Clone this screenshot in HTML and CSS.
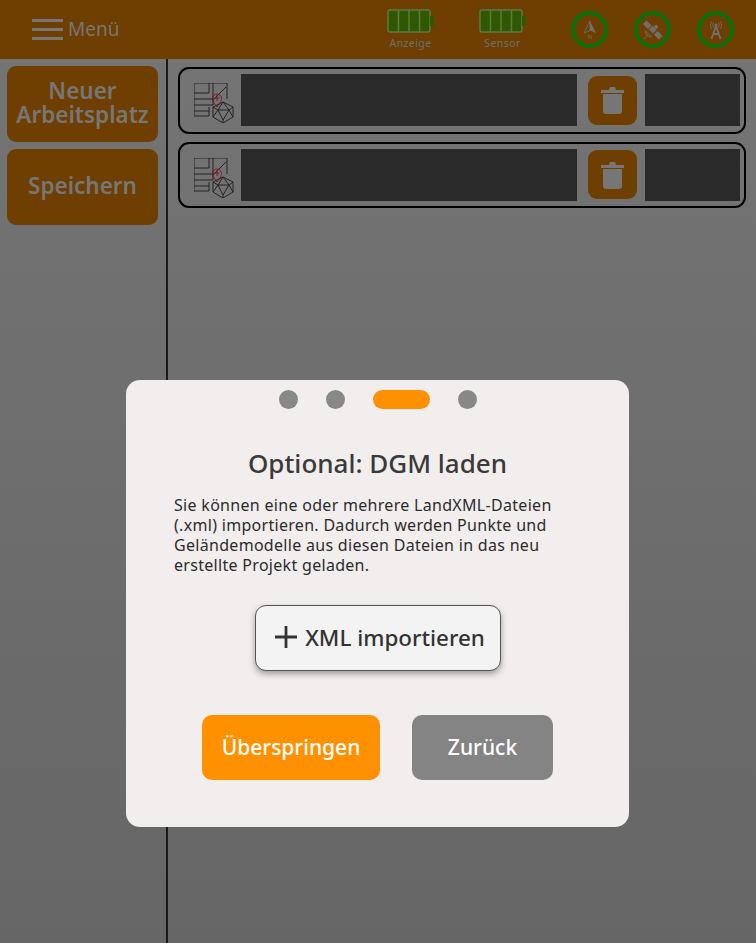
FILE: index.html
```html
<!DOCTYPE html>
<html lang="de">
<head>
    <meta charset="UTF-8">
    <title>Arbeitsplatz</title>
    <link rel="stylesheet" href="styles.css">
</head>
<body>
    <svg class="defs" width="0" height="0">
        <symbol id="tin-icon" viewBox="0 0 40 40">
            <g fill="none" stroke="#1c1c1c" stroke-width="0.9">
                <path d="M15 24V33H0V0H33V16"/>
                <path d="M0 10H15V0M19 0V22M0 16H19M0 22H19M0 28H15M19 17L32 4"/>
                <path d="M29 19L39 24V34L29 40L19 34V24ZM24 27H35L29 37ZM29 19L24 27L19 34M29 19L35 27L39 34M35 27L39 24M24 27L19 24M29 37V40"/>
            </g>
            <path d="M23 24C19 19 18.500 17 18.500 15.500A4.500 4.500 0 0 1 27.500 15.500C27.500 17 27 19 23 24ZM23 12V18M20.500 15H25.500" fill="none" stroke="#7d1a22" stroke-width="1"/>
        </symbol>
        <symbol id="trash-icon" viewBox="0 0 24 30">
            <path d="M0 5H23V8H0ZM8 5L9 2H14L15 5Z" fill="#767676"/>
            <path d="M2 9H21V26Q21 29 18 29H5Q2 29 2 26Z" fill="#767676"/>
        </symbol>
        <symbol id="battery-icon" viewBox="0 0 47 24">
            <rect x="1" y="1" width="42" height="22" rx="2" fill="#2f5800" stroke="#5d7a45" stroke-width="1.500"/>
            <path d="M11.500 1V23M22 1V23M32.500 1V23" stroke="#5d7a45" stroke-width="1.500"/>
            <path d="M43 7H47V17H43Z" fill="#2f5800"/>
        </symbol>
    </svg>

    <header class="topbar">
        <div class="menu">
            <span class="burger"><i></i><i></i><i></i></span>
            <span class="menu-label">Menü</span>
        </div>
        <div class="status">
            <div class="battery">
                <svg width="47" height="24"><use href="#battery-icon"/></svg>
                <span>Anzeige</span>
            </div>
            <div class="battery">
                <svg width="47" height="24"><use href="#battery-icon"/></svg>
                <span>Sensor</span>
            </div>
            <div class="rings">
                <div class="ring">
                    <svg width="20" height="20" viewBox="0 0 20 20">
                        <path d="M10 1L16 13L10 10.500Z" fill="#707070"/>
                        <path d="M10 1L4 13L10 10.500Z" fill="none" stroke="#707070" stroke-width="0.800"/>
                        <text x="10" y="19" class="north">N</text>
                    </svg>
                </div>
                <div class="ring">
                    <svg width="20" height="20" viewBox="0 0 20 20">
                        <g fill="#707070">
                            <path d="M3.500 0.500L8.500 5.500L5 9L0 4ZM14.500 11L19.500 16L16 19.500L11 14.500Z"/>
                            <path d="M9.500 6L13.500 10L10 13.500L6 9.500Z"/>
                            <path d="M13 4.500L15.500 7L13 9.500L10.500 7Z"/>
                        </g>
                        <path d="M2 10.500C2.500 14.500 4.500 16.500 8.500 17ZM1 19L5 14.500" fill="none" stroke="#707070" stroke-width="0.800"/>
                    </svg>
                </div>
                <div class="ring">
                    <svg width="20" height="20" viewBox="0 0 20 20">
                        <path d="M10 6L5.500 19M10 6L14.500 19M7 14H13" fill="none" stroke="#707070" stroke-width="1.800"/>
                        <circle cx="10" cy="5" r="1.500" fill="#707070"/>
                        <path d="M7.500 2.500Q6 5 7.500 7.500M12.500 2.500Q14 5 12.500 7.500M5.500 1Q3.300 5 5.500 9M14.500 1Q16.700 5 14.500 9" fill="none" stroke="#707070" stroke-width="0.800"/>
                    </svg>
                </div>
            </div>
        </div>
    </header>

    <div class="workspace">
        <aside class="sidebar">
            <button class="side-btn">Neuer Arbeitsplatz</button>
            <button class="side-btn">Speichern</button>
        </aside>
        <main class="content">
            <div class="row">
                <svg class="tin" width="40" height="40"><use href="#tin-icon"/></svg>
                <div class="field name-field"></div>
                <button class="trash"><svg width="24" height="30"><use href="#trash-icon"/></svg></button>
                <div class="field date-field"></div>
            </div>
            <div class="row">
                <svg class="tin" width="40" height="40"><use href="#tin-icon"/></svg>
                <div class="field name-field"></div>
                <button class="trash"><svg width="24" height="30"><use href="#trash-icon"/></svg></button>
                <div class="field date-field"></div>
            </div>
        </main>
    </div>

    <div class="overlay">
        <section class="dialog">
            <div class="steps">
                <span class="dot"></span>
                <span class="dot"></span>
                <span class="dot active"></span>
                <span class="dot"></span>
            </div>
            <h2>Optional: DGM laden</h2>
            <p>Sie können eine oder mehrere LandXML-Dateien<br>(.xml) importieren. Dadurch werden Punkte und<br>Geländemodelle aus diesen Dateien in das neu<br>erstellte Projekt geladen.</p>
            <button class="import-btn">
                <svg width="24" height="24" viewBox="0 0 24 24"><path d="M12 1V23M1 12H23" stroke="#333" stroke-width="2.800"/></svg>
                XML importieren
            </button>
            <div class="actions">
                <button class="action skip">Überspringen</button>
                <button class="action back">Zurück</button>
            </div>
        </section>
    </div>
</body>
</html>
```

FILE: styles.css
```css
* {
    margin: 0;
    padding: 0;
    box-sizing: border-box;
    font-family: 'Noto Sans', sans-serif;
}

:root {
    --dim-orange: #6e3f00;
    --dim-text: #767676;
    --orange: #ff9000;
}

html, body {
    height: 100%;
    overflow: hidden;
}

body {
    position: relative;
    background: linear-gradient(#757575, #666666);
    display: flex;
    flex-direction: column;
}

button {
    border: none;
    cursor: pointer;
}

.defs {
    position: absolute;
}

.topbar {
    height: 59px;
    flex-shrink: 0;
    background-color: var(--dim-orange);
    display: flex;
    justify-content: space-between;
    padding: 0 22px 0 32px;
}

.menu {
    display: flex;
    align-items: center;
    gap: 5px;
}

.burger {
    display: flex;
    flex-direction: column;
    gap: 6px;
    width: 31px;
}

.burger i {
    height: 3px;
    background-color: var(--dim-text);
}

.menu-label {
    color: var(--dim-text);
    font-size: 19px;
    position: relative;
    top: -1px;
}

.status {
    display: flex;
    gap: 45px;
}

.battery {
    width: 47px;
    padding-top: 9px;
    display: flex;
    flex-direction: column;
    align-items: center;
    gap: 3px;
}

.battery span {
    color: #6f6f6f;
    font-size: 10.500px;
    letter-spacing: 0.4px;
    line-height: 15px;
}

.rings {
    display: flex;
    align-items: center;
    gap: 26px;
}

.ring {
    width: 37px;
    height: 37px;
    border: 4px solid #0b700b;
    border-radius: 50%;
    display: flex;
    align-items: center;
    justify-content: center;
}

.north {
    fill: #707070;
    font-size: 6px;
    text-anchor: middle;
}

.workspace {
    flex: 1;
    display: flex;
}

.sidebar {
    width: 168px;
    flex-shrink: 0;
    border-right: 2px solid #1a1a1a;
    padding: 7px 8px 0 7px;
    display: flex;
    flex-direction: column;
    gap: 7px;
}

.side-btn {
    height: 76px;
    background-color: var(--dim-orange);
    color: var(--dim-text);
    border-radius: 9px;
    font-size: 22.500px;
    font-weight: 600;
    line-height: 24px;
    padding-bottom: 2px;
}

.content {
    flex: 1;
    padding: 8px 10px 0;
    display: flex;
    flex-direction: column;
    gap: 8px;
}

.row {
    height: 66.500px;
    border: 2px solid #000;
    border-radius: 11px;
    display: flex;
    align-items: center;
    padding-left: 14px;
    padding-right: 4px;
}

.tin {
    margin-top: 6px;
    margin-right: 7px;
}

.field {
    height: 52px;
    background-color: #2a2a2a;
}

.name-field {
    width: 336px;
}

.date-field {
    width: 95px;
}

.trash {
    width: 49px;
    height: 49px;
    margin: 0 8px 0 11px;
    background-color: var(--dim-orange);
    border-radius: 9px;
    display: flex;
    align-items: center;
    justify-content: center;
}

.overlay {
    position: absolute;
    inset: 0;
    display: flex;
    justify-content: center;
    padding-top: 380px;
    padding-right: 1px;
}

.dialog {
    width: 503px;
    height: 447px;
    background-color: #f1eeed;
    border-radius: 14px;
    display: flex;
    flex-direction: column;
    align-items: center;
    padding-top: 10px;
}

.steps {
    display: flex;
    gap: 28px;
    margin-left: 1px;
}

.dot {
    width: 19px;
    height: 19px;
    border-radius: 10px;
    background-color: #888888;
}

.dot.active {
    width: 57px;
    background-color: var(--orange);
}

.dialog h2 {
    margin-top: 38px;
    font-size: 26px;
    font-weight: 500;
    line-height: 32px;
    color: #3a3a3a;
}

.dialog p {
    align-self: flex-start;
    margin: 16px 0 0 48px;
    font-size: 16px;
    letter-spacing: 0.3px;
    line-height: 20px;
    color: #2c2c2c;
}

.import-btn {
    margin-top: 30px;
    width: 246px;
    height: 66px;
    padding: 0 0 2px 4px;
    background-color: #f3f3f3;
    border: 1px solid #555;
    border-radius: 11px;
    box-shadow: 0 3px 6px rgba(0, 0, 0, 0.35);
    color: #333;
    font-size: 22.400px;
    font-weight: 500;
    display: flex;
    align-items: center;
    justify-content: center;
    gap: 7px;
}

.actions {
    margin-top: 44px;
    display: flex;
    gap: 32px;
}

.action {
    height: 65px;
    padding-bottom: 2px;
    border-radius: 10px;
    color: #fff;
    font-size: 21px;
    font-weight: 500;
}

.skip {
    width: 178px;
    background-color: var(--orange);
}

.back {
    width: 141px;
    background-color: #848484;
}
```
